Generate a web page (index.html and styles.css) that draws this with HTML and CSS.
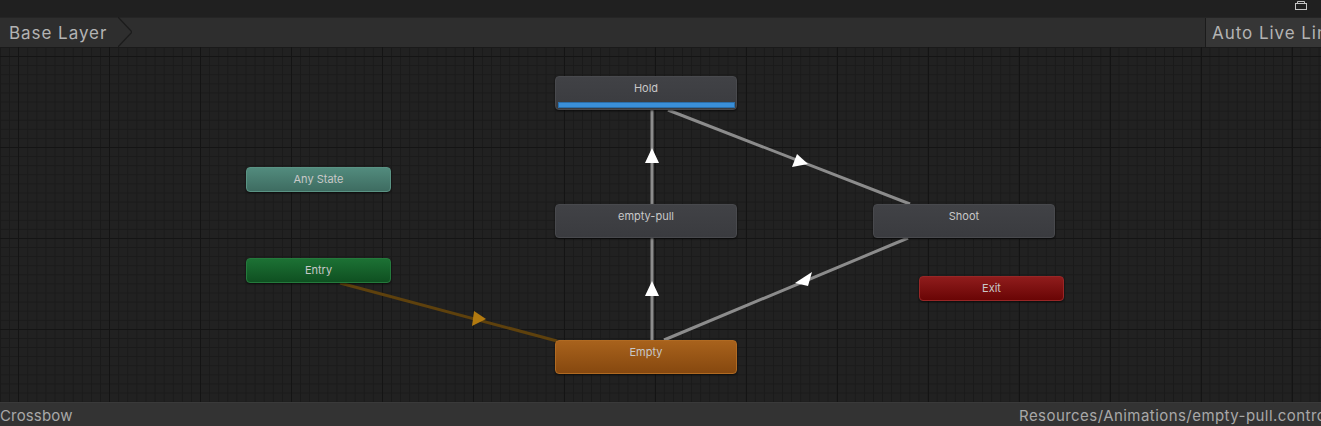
FILE: index.html
```html
<!DOCTYPE html>
<html>
<head>
<meta charset="utf-8">
<link rel="stylesheet" href="styles.css">
</head>
<body>
<div class="window">
  <div class="topstrip">
    <svg class="lock" width="14" height="10" viewBox="0 0 14 10"><path d="M3.5 3.5 V1.5 H10.5 V3.5" fill="none" stroke="#c4c4c4" stroke-width="1"/><rect x="1.5" y="3.5" width="11" height="6" fill="none" stroke="#c4c4c4" stroke-width="1"/></svg>
  </div>
  <div class="breadbar">
    <div class="crumb">Base Layer
      <svg class="chev" width="14" height="30" viewBox="0 0 14 30"><path d="M0 0 L14 15 L0 30 Z" fill="#2e2e2e"/><path d="M0 0 L14 15 L0 30" fill="none" stroke="#1c1c1c" stroke-width="1.2"/></svg>
    </div>
    <div class="spacer"></div>
    <div class="autolink">Auto Live Link</div>
  </div>
  <div class="canvas">
    <svg class="edges" width="1321" height="355" viewBox="0 47 1321 355">
      <line x1="340" y1="283" x2="557" y2="341" stroke="#5e410d" stroke-width="3"/>
      <polygon points="486,319 472,326 474,311" fill="#b27a10"/>
      <line x1="652" y1="110" x2="652" y2="340" stroke="#8c8c8c" stroke-width="3"/>
      <polygon points="652,148 659,163 645,163" fill="#ffffff"/>
      <polygon points="652,281 659,296 645,296" fill="#ffffff"/>
      <line x1="668" y1="110" x2="910" y2="204" stroke="#8c8c8c" stroke-width="3"/>
      <polygon points="808,164 792,167 797,154" fill="#ffffff"/>
      <line x1="664" y1="340" x2="908" y2="238" stroke="#8c8c8c" stroke-width="3"/>
      <polygon points="812,272 808,286 795,283" fill="#ffffff"/>
    </svg>
    <div class="node gray hold">Hold<div class="progress"></div></div>
    <div class="node teal anystate">Any State</div>
    <div class="node green entry">Entry</div>
    <div class="node gray emptypull">empty-pull</div>
    <div class="node gray shoot">Shoot</div>
    <div class="node red exit">Exit</div>
    <div class="node orange empty">Empty</div>
  </div>
  <div class="statusbar">
    <span class="left">Crossbow</span>
    <span class="right">Resources/Animations/empty-pull.controller</span>
  </div>
</div>
</body>
</html>
```
FILE: styles.css
```css
html, body {
  margin: 0;
  padding: 0;
  background: #202020;
  overflow: hidden;
}
.window {
  width: 1321px;
  height: 426px;
  display: flex;
  flex-direction: column;
  font-family: Inter, "Noto Sans", sans-serif;
  overflow: hidden;
}
.topstrip {
  height: 17px;
  background: #202020;
  position: relative;
  flex: none;
}
.lock {
  position: absolute;
  left: 1294px;
  top: 0px;
}
.breadbar {
  height: 30px;
  background: #2e2e2e;
  display: flex;
  align-items: stretch;
  flex: none;
  border-top: 1px solid #252525;
  box-sizing: border-box;
}
.crumb {
  position: relative;
  display: flex;
  align-items: center;
  padding-left: 9px;
  width: 109px;
  font-size: 17px;
  color: #b3b3b3;
  letter-spacing: 0.95px;
  background: #2e2e2e;
  flex: none;
}
.chev {
  position: absolute;
  right: -14px;
  top: -1px;
}
.spacer { flex: 1; }
.autolink {
  flex: none;
  box-sizing: border-box;
  width: 116px;
  border-left: 1px solid #1b1b1b;
  background: #363636;
  color: #b3b3b3;
  font-size: 17px;
  display: flex;
  align-items: center;
  padding-left: 6px;
  white-space: nowrap;
  overflow: hidden;
  letter-spacing: 0.95px;
}
.canvas {
  position: relative;
  flex: none;
  height: 355px;
  background-color: #212121;
  background-image:
    linear-gradient(to right, #141414 0, #141414 1.5px, transparent 1.5px),
    linear-gradient(to bottom, #141414 0, #141414 1.5px, transparent 1.5px),
    linear-gradient(to right, #1a1a1a 0, #1a1a1a 1px, transparent 1px),
    linear-gradient(to bottom, #1a1a1a 0, #1a1a1a 1px, transparent 1px);
  background-size: 91px 91px, 91px 91px, 9.1px 9.1px, 9.1px 9.1px;
  background-position: 18px 9px, 18px 9px, 0px 0px, 0px 0px;
  overflow: hidden;
}
.edges {
  position: absolute;
  left: 0;
  top: 0;
}
.node {
  position: absolute;
  box-sizing: border-box;
  border-radius: 4px;
  font-size: 11px;
  color: #c8c8c8;
  text-align: center;
  box-shadow: 0 1px 2px rgba(0,0,0,0.6);
}
.gray {
  background: linear-gradient(#414246, #3a3b3f);
  border: 1px solid #48494d;
  width: 182px;
  height: 34px;
  padding-top: 4px;
}
.hold { left: 555px; top: 29px; }
.emptypull { left: 555px; top: 157px; }
.shoot { left: 873px; top: 157px; }
.progress {
  position: absolute;
  left: 2px;
  right: 1px;
  bottom: 1px;
  height: 6px;
  background: #3a8fd8;
  border: 1px solid #2b6faa;
  box-sizing: border-box;
}
.teal {
  left: 246px; top: 120px;
  width: 145px; height: 25px;
  padding-top: 4px;
  background: linear-gradient(#528b7d, #3e6c61);
  border: 1px solid #5a9384;
}
.green {
  left: 246px; top: 211px;
  width: 145px; height: 25px;
  padding-top: 4px;
  background: linear-gradient(#1c7134, #0f5021);
  border: 1px solid #247a3c;
}
.red {
  left: 919px; top: 229px;
  width: 145px; height: 25px;
  padding-top: 4px;
  background: linear-gradient(#8f1c1c, #6a0505);
  border: 1px solid #982626;
}
.orange {
  left: 555px; top: 293px;
  width: 182px; height: 34px;
  padding-top: 4px;
  background: linear-gradient(#a8621c, #86480f);
  border: 1px solid #b06a22;
}
.statusbar {
  flex: 1;
  background: #333333;
  display: flex;
  align-items: flex-end;
  font-size: 15px;
  color: #a8a8a8;
  white-space: nowrap;
  overflow: hidden;
  border-top: 1px solid #3a3a3a;
}
.statusbar .left { line-height: 20px; width: 1019px; flex: none; letter-spacing: 0.15px; }
.statusbar .right {
  line-height: 20px;
  letter-spacing: 0.45px;
  flex: 1;
  min-width: 0;
  overflow: hidden;
}
```
